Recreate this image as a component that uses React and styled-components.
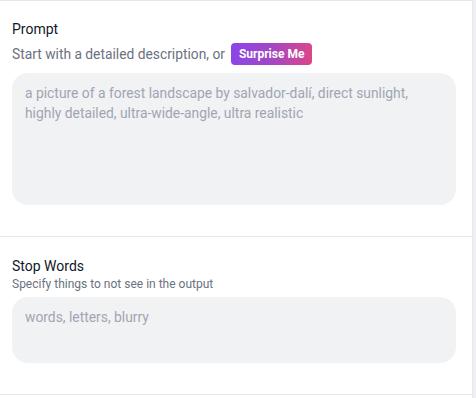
import React from "react";
import styled, { createGlobalStyle } from "styled-components";

const Global = createGlobalStyle`
  html, body { margin: 0; padding: 0; background: #eef0f3; }
  body { font-family: Roboto, "Noto Sans", sans-serif; }
  * { box-sizing: border-box; }
`;

const Page = styled.div`
  display: flex;
  height: 398px;
`;

const Panel = styled.div`
  width: 473px;
  background: #ffffff;
  border-right: 1px solid #e5e7eb;
  display: flex;
  flex-direction: column;
`;

const Section = styled.section`
  border-top: 1px solid #e5e7eb;
  padding: ${(p) => p.$pad};
  display: flex;
  flex-direction: column;
`;

const Label = styled.div`
  font-size: 14px;
  line-height: 20px;
  color: #111827;
`;

const HintRow = styled.div`
  display: flex;
  align-items: center;
  gap: 6px;
  margin-top: 4px;
  height: 22px;
`;

const Hint = styled.span`
  font-size: ${(p) => p.$size || "13.8px"};
  line-height: ${(p) => p.$lh || "20px"};
  color: #6b7280;
`;

const Surprise = styled.button`
  border: none;
  height: 22px;
  padding: 0 8px;
  border-radius: 4px;
  background: linear-gradient(90deg, #8b46e6 0%, #a347c4 50%, #db4689 100%);
  color: #fff;
  font-family: inherit;
  font-weight: 700;
  font-size: 12px;
  cursor: pointer;
`;

const Area = styled.textarea`
  display: block;
  width: 100%;
  height: ${(p) => p.$h};
  margin-top: ${(p) => p.$mt};
  resize: none;
  border: none;
  outline: none;
  border-radius: 16px;
  background: #f1f2f4;
  padding: 10px 13px;
  font-family: inherit;
  font-size: 13.85px;
  line-height: 20px;
  color: #374151;
  &::placeholder { color: #a0a6b1; }
`;

export default function App() {
  return (
    <>
      <Global />
      <Page>
        <Panel>
          <Section $pad="18px 16px 31px 12px">
            <Label>Prompt</Label>
            <HintRow>
              <Hint>Start with a detailed description, or</Hint>
              <Surprise>Surprise Me</Surprise>
            </HintRow>
            <Area
              $h="132px"
              $mt="8px"
              placeholder="a picture of a forest landscape by salvador-dalí, direct sunlight, highly detailed, ultra-wide-angle, ultra realistic"
            />
          </Section>
          <Section $pad="19px 16px 31px 12px">
            <Label>Stop Words</Label>
            <Hint $size="12px" $lh="16px">Specify things to not see in the output</Hint>
            <Area $h="66px" $mt="5px" placeholder="words, letters, blurry" />
          </Section>
          <Section $pad="0" />
        </Panel>
      </Page>
    </>
  );
}
